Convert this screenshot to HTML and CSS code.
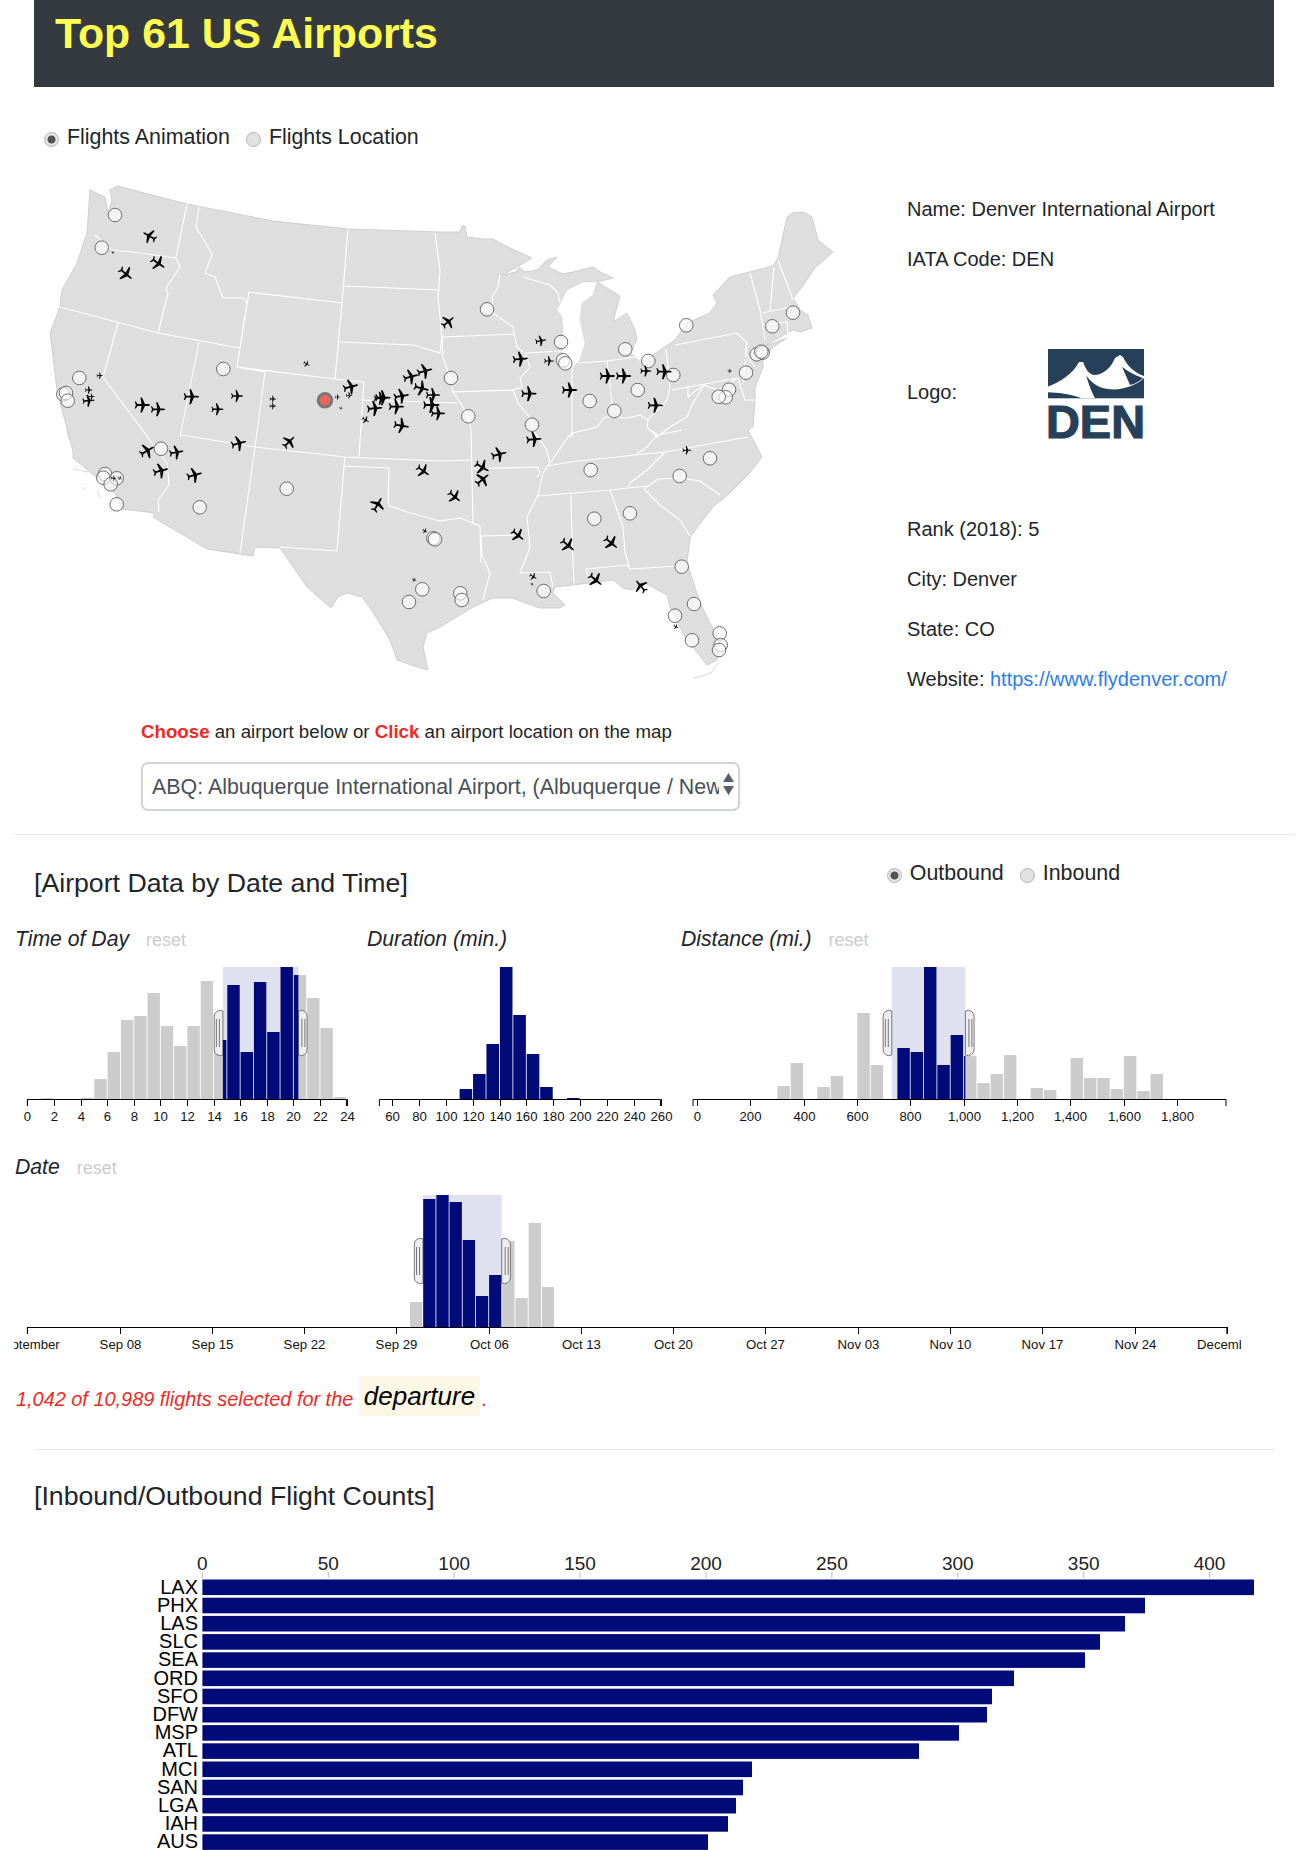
FILE: index.html
```html
<!DOCTYPE html>
<html>
  <head>
    <meta charset="utf-8">
    <title>Top 61 US Airports</title>
    <link rel="stylesheet" href="styles.css">
  </head>
  <body>
    <div class="banner"><h1 class="banner-title">Top 61 US Airports</h1></div>

    <div class="radio-row map-mode">
      <label class="radio-label"><input type="radio" name="mode" checked>Flights Animation</label>
      <label class="radio-label"><input type="radio" name="mode">Flights Location</label>
    </div>

    <div class="map-row">
      <svg class="map" width="800" height="530" viewBox="40 170 800 530">
        <path class="land" d="M117,186 L187,204 L273,221 L348,229 L440,232 L460,232 L462,226 L465,226 L467,237 L483,239 L493,239 L510,248 L532,258 L515,268 L502,275 L516,272 L519,267 L525,272 L537,270 L547,260 L557,257 L548,267 L563,274 L573,272 L593,267 L602,273 L613,278 L597,282 L620,296 L618,303 L613,322 L627,313 L635,330 L637,340 L630,353 L643,362 L653,355 L675,340 L687,323 L710,313 L717,303 L713,295 L730,277 L773,266 L778,258 L787,217 L792,213 L803,212 L812,217 L818,240 L833,252 L815,268 L802,287 L793,298 L800,310 L808,315 L812,328 L800,332 L793,330 L787,333 L763,347 L787,338 L773,347 L763,360 L763,367 L755,388 L755,400 L753,427 L748,430 L762,457 L748,475 L730,493 L713,507 L690,537 L687,563 L700,603 L720,643 L717,660 L707,665 L685,637 L670,607 L667,595 L643,582 L632,590 L623,588 L613,580 L597,582 L573,585 L555,587 L553,593 L565,605 L560,608 L540,608 L523,602 L512,598 L493,598 L473,607 L440,627 L427,633 L423,647 L428,670 L420,668 L397,660 L390,640 L373,612 L362,597 L347,593 L338,597 L331,608 L307,587 L280,548 L255,547 L253,556 L207,549 L153,517 L155,513 L122,509 L115,493 L90,472 L73,458 L73,450 L67,430 L70,440 L57,390 L53,357 L50,333 L60,307 L62,290 L77,263 L87,233 L90,190 L105,197 L108,213 L112,200 L110,190 Z"/>
        <path class="lake" d="M557,310 L567,290 L583,282 L597,282 L593,295 L582,303 L580,320 L585,343 L580,360 L573,367 L565,367 L562,353 L563,330 L562,317 Z"/>
        <path class="coast" d="M693,678 L700,677 L712,672 L718,663 M73,469 L88,472 M83,487 L85,490 M97,490 L100,498"/>
        <path class="state-lines" d="M187,204 L176,257 M95,235 L112,250 L140,253 L176,258 M176,258 L180,267 L166,288 L168,293 L158,333 M199,207 L196,227 L212,254 L205,273 L215,277 L223,298 L243,298 L247,302 L240,348 M60,307 L158,333 L240,348 M118,323 L103,377 L155,447 L167,463 L169,485 L158,500 L159,512 M199,342 L180,437 M182,435 L255,447 L345,457 L440,461 L472,460 M240,348 L237,367 L265,372 M249,292 L342,303 M249,292 L237,367 L335,379 M342,303 L335,379 M265,372 L255,447 M335,379 L364,382 L360,440 L359,457 M339,342 L413,345 L440,353 L442,337 M348,229 L342,303 M344,286 L440,290 M435,233 L440,270 L438,297 L442,337 M500,275 L498,287 L492,297 L493,313 L513,327 L517,347 L523,352 M442,337 L515,334 M525,353 L562,351 M525,353 L530,367 L520,378 L522,387 L513,390 M452,392 L513,390 M513,390 L518,403 L530,418 L535,433 L547,450 L550,463 M442,337 L443,357 L450,377 L453,392 L463,407 L468,417 L471,430 L473,523 M363,400 L457,403 M345,457 L344,466 L389,468 L388,505 L407,512 L440,521 L460,518 L480,526 L481,563 M255,447 L240,553 M344,466 L337,551 L280,547 M472,469 L538,467 L540,473 L537,477 M481,536 L522,535 M481,536 L482,555 L490,573 L483,600 M550,463 L543,473 L538,495 L527,517 L530,547 L520,573 L550,572 L553,587 M538,496 L610,490 L647,486 M644,489 L658,479 L680,478 L700,481 L720,495 M644,489 L660,505 L680,520 L690,536 M548,466 L570,462 L635,455 L665,452 L748,437 M665,452 L647,470 L630,483 L628,487 M571,495 L572,540 L574,583 M610,490 L623,527 L625,552 L630,569 M586,569 L627,565 L630,569 L677,566 M586,569 L588,577 M550,463 L568,437 L573,433 L597,427 L605,417 L627,418 L640,415 L648,420 L657,410 L667,400 L670,387 M648,420 L647,427 L657,437 L650,430 L658,435 L682,430 M657,435 L647,447 L635,455 M572,363 L572,437 M607,361 L612,403 L613,413 M578,363 L607,361 L635,357 L643,362 M666,349 L670,387 M672,390 L738,378 M675,345 L737,333 L747,343 L745,353 L755,367 M747,343 L743,383 M672,390 L688,387 L688,397 L703,385 L718,390 L738,378 M703,387 L693,403 L687,417 L670,427 L657,437 M738,378 L745,400 L755,400 M750,273 L760,310 L765,340 M774,267 L770,310 M778,260 L793,300 M762,313 L790,307 M763,325 L787,322 L788,333 M523,277 L550,285 L558,293 L560,303"/>
        <defs>
          <path id="plane" d="M10,0 Q9,-1.2 7,-1.2 L3,-1.2 L-1,-10 L-3,-10 L-1.5,-1.2 L-7,-1.2 L-9,-4.5 L-10.5,-4.5 L-9,0 L-10.5,4.5 L-9,4.5 L-7,1.2 L-1.5,1.2 L-3,10 L-1,10 L3,1.2 L7,1.2 Q9,1.2 10,0 Z"/>
        </defs>
        <g id="airports"></g>
        <g id="planes"></g>
      </svg>

      <div class="airport-info">
        <p class="info-line">Name: Denver International Airport</p>
        <p class="info-line">IATA Code: DEN</p>
        <div class="logo-row">
          <span class="logo-label">Logo:</span>
          <svg class="logo" width="96" height="90" viewBox="0 0 96 90">
            <rect class="logo-ink" width="96" height="49.3"/>
            <path class="logo-white" d="M0,37.5 C12,33 25,25 31,13 L35,13 C37,24 41,38 47,49.3 L33.7,49.3 C22,45 10,43.5 0,43.3 Z"/>
            <path class="logo-white" d="M35,13 C38,21 41,25 46,26 C55,26 63,19 67,9 L72,6 L75,8 C79,17 87,24 96,27 L96,29 C88,37 72,42 60,40 C48,39 40,30 35,22 Z"/>
            <path class="logo-ink" d="M74,17.7 C78,21 86,26 95,29 C92,32 87,35 82,36 Z"/>
            <text class="logo-text" x="-2" y="88.5" textLength="99" lengthAdjust="spacingAndGlyphs">DEN</text>
          </svg>
        </div>
        <p class="info-line">Rank (2018): 5</p>
        <p class="info-line">City: Denver</p>
        <p class="info-line">State: CO</p>
        <p class="info-line">Website: <a class="info-link" href="#">https://www.flydenver.com/</a></p>
      </div>
    </div>

    <p class="choose-text"><b class="red">Choose</b> an airport below or <b class="red">Click</b> an airport location on the map</p>
    <div class="select-box">
      <select class="airport-select">
        <option>ABQ: Albuquerque International Airport, (Albuquerque / New Mexico)</option>
        <option>DEN: Denver International Airport, (Denver / Colorado)</option>
      </select>
      <svg class="select-arrows" width="13" height="24" viewBox="0 0 13 24">
        <path d="M6.5,1 L12,10 L1,10 Z M6.5,23 L12,14 L1,14 Z"/>
      </svg>
    </div>

    <hr class="rule-wide">

    <div class="section-top">
      <h3 class="section-title">[Airport Data by Date and Time]</h3>
      <div class="radio-row direction">
        <label class="radio-label"><input type="radio" name="dir" checked>Outbound</label>
        <label class="radio-label"><input type="radio" name="dir">Inbound</label>
      </div>
    </div>

    <div class="charts">
      <div class="chart">
        <div class="chart-title">Time of Day <span class="reset">reset</span></div>
        <svg id="chart-time" width="352" height="162"></svg>
      </div>
      <div class="chart">
        <div class="chart-title">Duration (min.)</div>
        <svg id="chart-duration" width="314" height="162"></svg>
      </div>
      <div class="chart">
        <div class="chart-title">Distance (mi.) <span class="reset">reset</span></div>
        <svg id="chart-distance" width="560" height="162"></svg>
      </div>
      <div class="chart chart-date">
        <div class="chart-title">Date <span class="reset">reset</span></div>
        <svg id="chart-date" width="1227" height="162"></svg>
      </div>
    </div>

    <p class="selected-text">1,042 of 10,989 flights selected for the <span class="selected-word">departure</span>.</p>

    <hr class="rule-narrow">

    <h3 class="section-title counts-title">[Inbound/Outbound Flight Counts]</h3>
    <svg id="counts" class="counts" width="1308" height="310"></svg>

    <script src="script.js"></script>
  </body>
</html>
```

FILE: styles.css
```css
body{
  margin: 0;
  height: 1850px;
  overflow: hidden;
  font-family: "Liberation Sans", Arial, sans-serif;
  color: #212529;
  background-color: white;
}
.banner{
  margin: 0 34px;
  height: 87px;
  padding-left: 21px;
  background-color: #343a40;
}
.banner-title{
  margin: 0;
  font-size: 42.8px;
  line-height: 66px;
  font-weight: bold;
  color: #ffff4f;
}
.radio-row{
  display: flex;
  gap: 16px;
  height: 28px;
  font-size: 21.4px;
  line-height: 28px;
}
.map-mode{
  margin: 36px 0 0 44px;
}
.radio-label{
  display: flex;
  align-items: center;
}
.radio-label input{
  appearance: none;
  width: 15px;
  height: 15px;
  margin: 4px 8px 0 0;
  border: 1px solid #b5b5b5;
  border-radius: 50%;
  background-color: #e2e2e2;
}
.radio-label input:checked{
  background: radial-gradient(circle, #555 0, #555 3.6px, #e2e2e2 4.4px);
}
.map-row{
  display: flex;
  margin: 19px 0 0 40px;
  height: 530px;
}
.land{
  fill: #dedede;
  stroke: #cfcfcf;
  stroke-width: 1;
  stroke-linejoin: round;
}
.lake{
  fill: white;
  stroke: #d4d4d4;
  stroke-width: 0.5;
}
.coast{
  fill: none;
  stroke: #d8d8d8;
  stroke-width: 1;
}
.state-lines{
  fill: none;
  stroke: white;
  stroke-width: 1.1;
  stroke-linejoin: round;
}
.airport{
  fill: rgba(255, 255, 255, 0.6);
  stroke: #6c6c6c;
  stroke-width: 1;
}
.airport-current{
  fill: #e9665c;
  stroke: #777;
  stroke-width: 3;
}
.airport-info{
  margin-left: 67px;
  padding-top: 24px;
  font-size: 20px;
  line-height: 30px;
}
.info-line{
  margin: 0 0 20px 0;
}
.info-link{
  color: #2b7de9;
  text-decoration: none;
}
.logo-row{
  display: flex;
  align-items: center;
  height: 200px;
  margin-bottom: 20px;
}
.logo-label{
  width: 141px;
  margin-bottom: 4px;
}
.logo{
  overflow: visible;
}
.logo-ink{
  fill: #27405a;
}
.logo-white{
  fill: white;
}
.logo-text{
  fill: #27405a;
  stroke: #27405a;
  stroke-width: 1.2;
  font-size: 46px;
  font-weight: bold;
}
.choose-text{
  margin: 18px 0 0 141px;
  font-size: 18.7px;
  line-height: 28px;
}
.red{
  color: #f02a1f;
}
.select-box{
  position: relative;
  width: 599px;
  height: 49px;
  margin: 16px 0 0 141px;
}
.airport-select{
  appearance: none;
  box-sizing: border-box;
  width: 100%;
  height: 100%;
  padding: 0 19px 0 9px;
  border: 2px solid #ced4da;
  border-radius: 7px;
  background-color: white;
  color: #495057;
  font-family: inherit;
  font-size: 21.4px;
}
.select-arrows{
  position: absolute;
  right: 5px;
  top: 10px;
  fill: #5a5f66;
}
.rule-wide{
  margin: 23px 14px 0 14px;
  border: 0;
  border-top: 1px solid #e6e6e6;
}
.section-top{
  display: flex;
  height: 64px;
}
.section-title{
  margin: 32px 0 0 34px;
  font-size: 26.7px;
  line-height: 32px;
  font-weight: normal;
}
.direction{
  margin: 24px 0 0 479px;
}
.charts{
  display: flex;
  flex-wrap: wrap;
  margin: 25px 0 0 14px;
}
.chart svg{
  display: block;
  margin-top: 13px;
}
.chart-date{
  margin-top: 23px;
}
.chart-title{
  height: 30px;
  padding-left: 1px;
  font-size: 21.2px;
  line-height: 30px;
  font-style: italic;
}
.reset{
  margin-left: 11px;
  font-size: 18px;
  font-style: normal;
  color: #ccc;
}
.bar-back{
  fill: #ccc;
}
.bar-front{
  fill: #000a78;
}
.brush{
  fill: #dfe1ef;
}
.handle{
  fill: #eee;
  stroke: #777;
  stroke-width: 1;
}
.axis-line{
  fill: none;
  stroke: black;
  stroke-width: 1;
}
.axis-text{
  font-size: 13.2px;
  text-anchor: middle;
  fill: #111;
}
.selected-text{
  display: flex;
  box-sizing: border-box;
  align-items: flex-start;
  height: 40px;
  margin: 19px 0 0 16px;
  padding-top: 10px;
  font-size: 19.9px;
  line-height: 26px;
  font-style: italic;
  color: #f02a1f;
  white-space: pre;
}
.selected-word{
  height: 40px;
  margin: -10px 2px 0 0;
  padding: 0 5px;
  background-color: #fcf8e6;
  color: black;
  font-size: 26px;
  line-height: 40px;
}
.rule-narrow{
  margin: 33px 34px 0 34px;
  border: 0;
  border-top: 1px solid #e6e6e6;
}
.counts-title{
  margin-top: 30px;
}
.counts{
  display: block;
  margin-top: 28px;
}
.count-bar{
  fill: #000a78;
}
.count-label{
  font-size: 20px;
  text-anchor: end;
  fill: black;
}
.count-tick{
  font-size: 19px;
  text-anchor: middle;
  fill: #222;
}
.count-line{
  stroke: #bbb;
  stroke-width: 1;
}
```

FILE: script.js
```js
const SVG_NS = 'http://www.w3.org/2000/svg';

function add(parent, name, attrs, text) {
  const el = document.createElementNS(SVG_NS, name);
  for (const key in attrs) {
    el.setAttribute(key, attrs[key]);
  }
  if (text !== undefined) {
    el.textContent = text;
  }
  parent.appendChild(el);
  return el;
}

// map points, in page pixels
const airports = [
  [115,215],[101.7,247.7],[79.3,378],[63.3,394.3],[66,393],[67.7,400.7],[223.3,369],
  [487,309.3],[561,342],[563,360.3],[565.3,363.3],[625.3,349.3],[648.3,361],[686.3,325.3],
  [772.3,326.3],[793,312.7],[756.7,354.3],[762.7,352.7],[761.3,351.7],[746,372.7],[673.3,375],
  [637.7,390],[589.7,401],[614.3,411],[729,389.7],[725.7,397.3],[718.7,396.7],[451,378],
  [468.3,416.3],[532,424.7],[161,448.7],[105,474],[103.3,477.7],[116.7,478.3],[110.7,484.3],
  [116.7,504.3],[199.7,507.3],[286.7,488.7],[433.3,538.3],[435,539.3],[422.3,589.3],[409,602],
  [460.3,593.3],[461.7,600],[543.7,591],[590.7,470],[594.3,518.7],[630,513.3],[679.7,476],
  [710,458.3],[681.7,566.7],[694,604],[675,615.7],[692,640.3],[719.7,633.3],[720.7,645],[719,650]
];

// x, y, size, heading
const planes = [
  [149.3,236,13,-150],[112.7,252.3,3,-150],[158.3,263.3,14,35],[126,274,14,40],[306.7,364,6,30],
  [351,386.7,14,-15],[100,375.7,6,0],[89,390,7,0],[91.7,396.7,6,0],[88.7,400.7,11,-5],
  [142.7,405,14,0],[158.3,409.3,13,0],[191.7,396.7,14,0],[237.3,396,11,0],[217.7,409.3,11,0],
  [273,399,6,0],[273,406,6,0],[337.7,397,5,0],[349.3,395.3,6,0],[341,408.3,3,30],[365.7,420,7,30],
  [375,408.3,14,-5],[383.3,397.7,14,0],[380.7,398.3,12,0],[396.7,406.7,14,0],[401.7,396,14,-10],
  [411,376.7,14,-15],[425,371,14,-15],[421.7,388.3,14,15],[433.3,395,13,0],[431.7,405,15,0],
  [401.7,425.7,14,10],[438.3,413.3,13,0],[448.3,321.7,13,-40],[541,340.7,10,-10],[520.7,359,14,-5],
  [549.3,361,9,0],[607.7,376,14,0],[624,376,14,0],[646,371,10,0],[664.3,371.7,14,0],[730,371,4,0],
  [529.3,393.7,14,0],[570,390,14,0],[655.7,405.3,14,0],[147.3,450.7,14,-30],[176.7,452.3,13,-10],
  [161,470.7,14,-15],[194.7,475,14,-15],[239,443.3,14,-15],[289.3,441.7,13,-45],[423.3,471,13,35],
  [377.7,504.3,14,-60],[114,478.3,5,0],[120,478.3,4,30],[425,531,5,30],[414.3,580,4,30],
  [534.3,439.3,14,-5],[499.3,454.3,14,-15],[482.3,467.3,14,30],[482.7,479.3,14,-40],[454.7,496.7,13,40],
  [518,535.3,13,40],[568,545.3,14,40],[611.3,543,14,40],[595.7,580,14,40],[640.7,586,13,-130],
  [533.3,576.7,7,30],[532.3,584.3,3,30],[676,626.7,5,30],[687,450.3,8,0]
];

const airportLayer = document.getElementById('airports');
airports.forEach(function (a) {
  add(airportLayer, 'circle', { cx: a[0], cy: a[1], r: 6.8, class: 'airport' });
});
add(airportLayer, 'circle', { cx: 325, cy: 400.3, r: 6.8, class: 'airport-current' });

const planeLayer = document.getElementById('planes');
planes.forEach(function (p) {
  const scale = p[2] * 1.08 / 20;
  add(planeLayer, 'use', {
    href: '#plane',
    transform: 'translate(' + p[0] + ',' + p[1] + ') rotate(' + p[3] + ') scale(' + scale + ')'
  });
});

const CHART_TOP = 0;
const CHART_HEIGHT = 132;
let clipCount = 0;

function handlePath(x, dir) {
  const y = CHART_HEIGHT / 3;
  const sweep = dir > 0 ? 1 : 0;
  return 'M' + x + ',' + y +
    'A6,6 0 0 ' + sweep + ' ' + (x + 8.7 * dir) + ',' + (y + 6) +
    'V' + (2 * y - 6) +
    'A6,6 0 0 ' + sweep + ' ' + x + ',' + (2 * y) + 'Z' +
    'M' + (x + 3.5 * dir) + ',' + (y + 8) + 'V' + (2 * y - 8) +
    'M' + (x + 6.5 * dir) + ',' + (y + 8) + 'V' + (2 * y - 8);
}

function drawChart(id, opts) {
  const svg = document.getElementById(id);
  const scale = function (v) { return opts.left + (v - opts.start) * opts.perUnit; };
  const base = CHART_TOP + CHART_HEIGHT;
  const step = opts.binSize * opts.perUnit;

  opts.bars.forEach(function (b) {
    add(svg, 'rect', { x: scale(b[0]) + 0.4, y: base - b[1], width: step - 0.9, height: b[1], class: 'bar-back' });
  });

  let clip = '';
  if (opts.brush) {
    clipCount += 1;
    clip = 'brush-clip-' + clipCount;
    const width = opts.brush[1] - opts.brush[0];
    const clipPath = add(svg, 'clipPath', { id: clip });
    add(clipPath, 'rect', { x: opts.brush[0], y: CHART_TOP, width: width, height: CHART_HEIGHT });
    add(svg, 'rect', { x: opts.brush[0], y: CHART_TOP, width: width, height: CHART_HEIGHT, class: 'brush' });
    add(svg, 'path', { d: handlePath(opts.brush[0], -1), class: 'handle' });
    add(svg, 'path', { d: handlePath(opts.brush[1], 1), class: 'handle' });
  }

  const front = add(svg, 'g', clip ? { 'clip-path': 'url(#' + clip + ')' } : {});
  opts.bars.forEach(function (b) {
    add(front, 'rect', { x: scale(b[0]) + 0.4, y: base - b[1], width: step - 0.9, height: b[1], class: 'bar-front' });
  });

  const axisEnd = opts.left + opts.axisLength;
  add(svg, 'path', {
    d: 'M' + opts.left + ',' + (base + 7) + 'V' + (base + 0.5) + 'H' + axisEnd + 'V' + (base + 7),
    class: 'axis-line'
  });
  opts.ticks.forEach(function (t) {
    const x = Math.round(scale(t[0])) + 0.5;
    add(svg, 'line', { x1: x, x2: x, y1: base, y2: base + 7, class: 'axis-line' });
    add(svg, 'text', { x: x, y: base + 22, class: 'axis-text' }, t[1]);
  });
}

function numberTicks(from, to, by) {
  const ticks = [];
  for (let v = from; v <= to; v += by) {
    ticks.push([v, v.toLocaleString('en-US')]);
  }
  return ticks;
}

drawChart('chart-time', {
  left: 13.4, start: 0, perUnit: 13.3, binSize: 1, axisLength: 319,
  brush: [208.9, 284.4],
  ticks: numberTicks(0, 24, 2),
  bars: [[1,1],[4,1.3],[5,20],[6,47],[7,79],[8,83],[9,106],[10,73],[11,53],[12,73],[13,118],[14,59],
    [15,114],[16,47],[17,117],[18,67],[19,132],[20,124],[21,101],[22,71],[23,2]]
});

drawChart('chart-duration', {
  left: 13.4, start: 50.5, perUnit: 1.342, binSize: 10, axisLength: 281,
  ticks: numberTicks(60, 260, 20),
  bars: [[110,10],[120,25],[130,55],[140,132],[150,84],[160,45],[170,12],[190,1]]
});

drawChart('chart-distance', {
  left: 13, start: -15, perUnit: 0.2666, binSize: 50, axisLength: 533,
  brush: [211.8, 285.4],
  ticks: numberTicks(0, 1800, 200),
  bars: [[300,13],[350,36],[450,12],[500,23],[600,86],[650,34],[750,51],[800,47],[850,132],[900,34],
    [950,64],[1000,43],[1050,16],[1100,25],[1150,44],[1250,11],[1300,9],[1400,41],[1450,21],[1500,21],
    [1550,10],[1600,43],[1650,8],[1700,25]]
});

drawChart('chart-date', {
  left: 13.4, start: 0, perUnit: 13.18, binSize: 1, axisLength: 1199.5,
  brush: [409, 487.7],
  ticks: [[0,'September'],[7,'Sep 08'],[14,'Sep 15'],[21,'Sep 22'],[28,'Sep 29'],[35,'Oct 06'],[42,'Oct 13'],
    [49,'Oct 20'],[56,'Oct 27'],[63,'Nov 03'],[70,'Nov 10'],[77,'Nov 17'],[84,'Nov 24'],[91,'December']],
  bars: [[29,25],[30,128],[31,132],[32,125],[33,87],[34,31],[35,52],[36,86],[37,29],[38,104],[39,40]]
});

// flight counts
const counts = [
  ['LAX',1254],['PHX',1145],['LAS',1125],['SLC',1100],['SEA',1085],['ORD',1014],['SFO',992],['DFW',987],
  ['MSP',959],['ATL',919],['MCI',752],['SAN',743],['LGA',736],['IAH',728],['AUS',708]
];
const countsSvg = document.getElementById('counts');
const ZERO = 202.4;

for (let v = 0; v <= 400; v += 50) {
  const x = ZERO + v * 2.518;
  add(countsSvg, 'text', { x: x, y: 30, class: 'count-tick' }, v);
  add(countsSvg, 'line', { x1: x, x2: x, y1: 32, y2: 38, class: 'count-line' });
}
counts.forEach(function (row, i) {
  const y = 39.5 + i * 18.2;
  add(countsSvg, 'rect', { x: ZERO, y: y, width: row[1] - ZERO, height: 15.6, class: 'count-bar' });
  add(countsSvg, 'text', { x: 198, y: y + 14, class: 'count-label' }, row[0]);
});
```
